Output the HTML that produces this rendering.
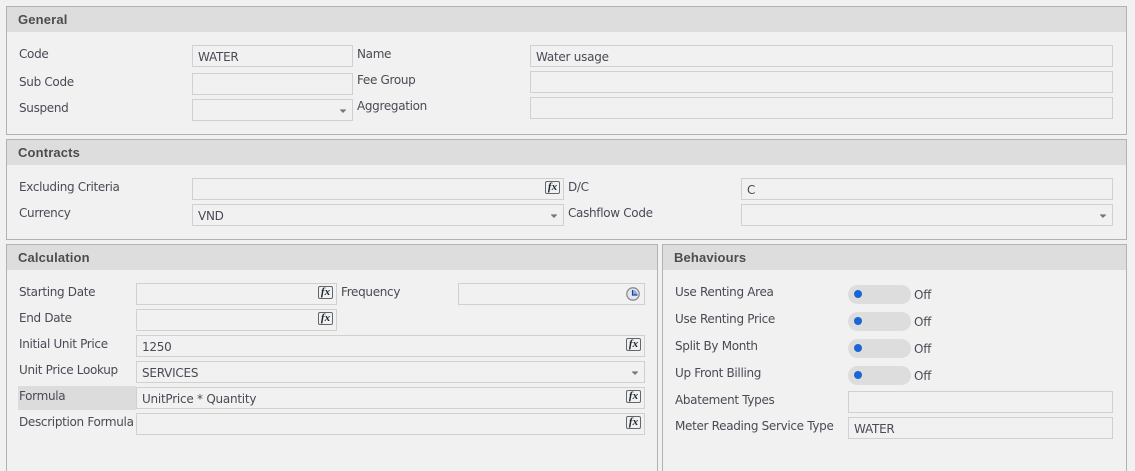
<!DOCTYPE html>
<html><head><meta charset="utf-8"><style>
html,body{margin:0;padding:0;width:1135px;height:471px;overflow:hidden;background:#f1f1f1}
body{position:relative;font-family:"DejaVu Sans","Liberation Sans",sans-serif;font-size:12px;color:#4a4a55}
.p{position:absolute;box-sizing:border-box;border:1px solid #b2b2b2;background:#f1f1f1}
.h{position:absolute;left:0;right:0;top:0;height:25px;background:#ddd;font-weight:bold;line-height:25px;padding-left:11px;color:#4d4d4d;font-family:"Liberation Sans",sans-serif;font-size:13px;letter-spacing:.15px}
.l{position:absolute;line-height:14px;white-space:nowrap;letter-spacing:-.32px}
.i{position:absolute;box-sizing:border-box;height:22px;border:1px solid #d0d0d0;background:#f1f1f1;line-height:22px;padding-left:5px;white-space:nowrap;letter-spacing:-.25px}
.a{position:absolute;right:6px;top:10px;width:0;height:0;border:3px solid transparent;border-top:3px solid #777;border-bottom:0}
.a:before{content:"";position:absolute;left:-3px;top:-4px;width:6px;height:1px;background:#aaa}
.fx{position:absolute;right:3px;top:2px;box-sizing:border-box;width:15px;height:13px;border:1px solid #666;border-radius:2px;background:#eef2f7;font:italic bold 11px/10px "Liberation Serif",serif;color:#222;text-align:center;padding:0;letter-spacing:0}
.t{position:absolute;left:848px;width:63px;height:19px;border-radius:9.5px;background:#ddd}
.t:before{content:"";position:absolute;left:6px;top:5px;width:8px;height:8px;border-radius:50%;background:#1a66d6}
.o{position:absolute;left:914px;line-height:14px;letter-spacing:-.25px}
</style></head><body>

<div class="p" style="left:6px;top:6px;width:1121px;height:129px"><div class="h">General</div></div>
<div class="p" style="left:6px;top:139px;width:1121px;height:101px"><div class="h">Contracts</div></div>
<div class="p" style="left:6px;top:244px;width:652px;height:240px"><div class="h">Calculation</div></div>
<div class="p" style="left:662px;top:244px;width:465px;height:240px"><div class="h">Behaviours</div></div>

<div class="l" style="left:19px;top:47px">Code</div>
<div class="l" style="left:19px;top:75px">Sub Code</div>
<div class="l" style="left:19px;top:101px">Suspend</div>
<div class="i" style="left:192px;top:45px;width:161px">WATER</div>
<div class="i" style="left:192px;top:73px;width:161px"></div>
<div class="i" style="left:192px;top:99px;width:161px"><span class="a"></span></div>
<div class="l" style="left:357px;top:47px">Name</div>
<div class="l" style="left:357px;top:73px">Fee Group</div>
<div class="l" style="left:357px;top:99px">Aggregation</div>
<div class="i" style="left:530px;top:45px;width:583px">Water usage</div>
<div class="i" style="left:530px;top:71px;width:583px"></div>
<div class="i" style="left:530px;top:97px;width:583px"></div>

<div class="l" style="left:19px;top:180px">Excluding Criteria</div>
<div class="l" style="left:19px;top:206px">Currency</div>
<div class="i" style="left:192px;top:178px;width:372px"><span class="fx">fx</span></div>
<div class="i" style="left:192px;top:204px;width:372px">VND<span class="a"></span></div>
<div class="l" style="left:568px;top:180px">D/C</div>
<div class="l" style="left:568px;top:206px">Cashflow Code</div>
<div class="i" style="left:741px;top:178px;width:372px">C</div>
<div class="i" style="left:741px;top:204px;width:372px"><span class="a"></span></div>

<div style="position:absolute;left:18px;top:386px;width:118px;height:24px;background:#dcdcdc"></div>
<div class="l" style="left:19px;top:285px">Starting Date</div>
<div class="l" style="left:19px;top:311px">End Date</div>
<div class="l" style="left:19px;top:337px">Initial Unit Price</div>
<div class="l" style="left:19px;top:363px">Unit Price Lookup</div>
<div class="l" style="left:19px;top:389px">Formula</div>
<div class="l" style="left:19px;top:415px">Description Formula</div>
<div class="i" style="left:136px;top:283px;width:201px"><span class="fx">fx</span></div>
<div class="i" style="left:136px;top:309px;width:201px"><span class="fx">fx</span></div>
<div class="i" style="left:136px;top:335px;width:509px">1250<span class="fx">fx</span></div>
<div class="i" style="left:136px;top:361px;width:509px">SERVICES<span class="a"></span></div>
<div class="i" style="left:136px;top:387px;width:509px">UnitPrice * Quantity<span class="fx">fx</span></div>
<div class="i" style="left:136px;top:413px;width:509px"><span class="fx">fx</span></div>
<div class="l" style="left:341px;top:285px">Frequency</div>
<div class="i" style="left:458px;top:283px;width:187px"></div>
<svg style="position:absolute;left:626px;top:287px" width="14" height="14" viewBox="0 0 14 14"><circle cx="7" cy="7" r="6.2" fill="#e3e8f0" stroke="#8c8c8c" stroke-width="1.3"/><path d="M7 3V8H11.5A4.5 5 0 0 0 7 3Z" fill="#8fa8e0"/><path d="M6.5 3V8H11.5" fill="none" stroke="#1f3f9f" stroke-width="1.2"/></svg>

<div class="l" style="left:675px;top:285px">Use Renting Area</div>
<div class="l" style="left:675px;top:312px">Use Renting Price</div>
<div class="l" style="left:675px;top:339px">Split By Month</div>
<div class="l" style="left:675px;top:366px">Up Front Billing</div>
<div class="l" style="left:675px;top:393px">Abatement Types</div>
<div class="l" style="left:675px;top:419px">Meter Reading Service Type</div>
<div class="t" style="top:285px"></div><div class="o" style="top:288px">Off</div>
<div class="t" style="top:312px"></div><div class="o" style="top:315px">Off</div>
<div class="t" style="top:339px"></div><div class="o" style="top:342px">Off</div>
<div class="t" style="top:366px"></div><div class="o" style="top:369px">Off</div>
<div class="i" style="left:848px;top:391px;width:265px"></div>
<div class="i" style="left:848px;top:417px;width:265px">WATER</div>
</body></html>
